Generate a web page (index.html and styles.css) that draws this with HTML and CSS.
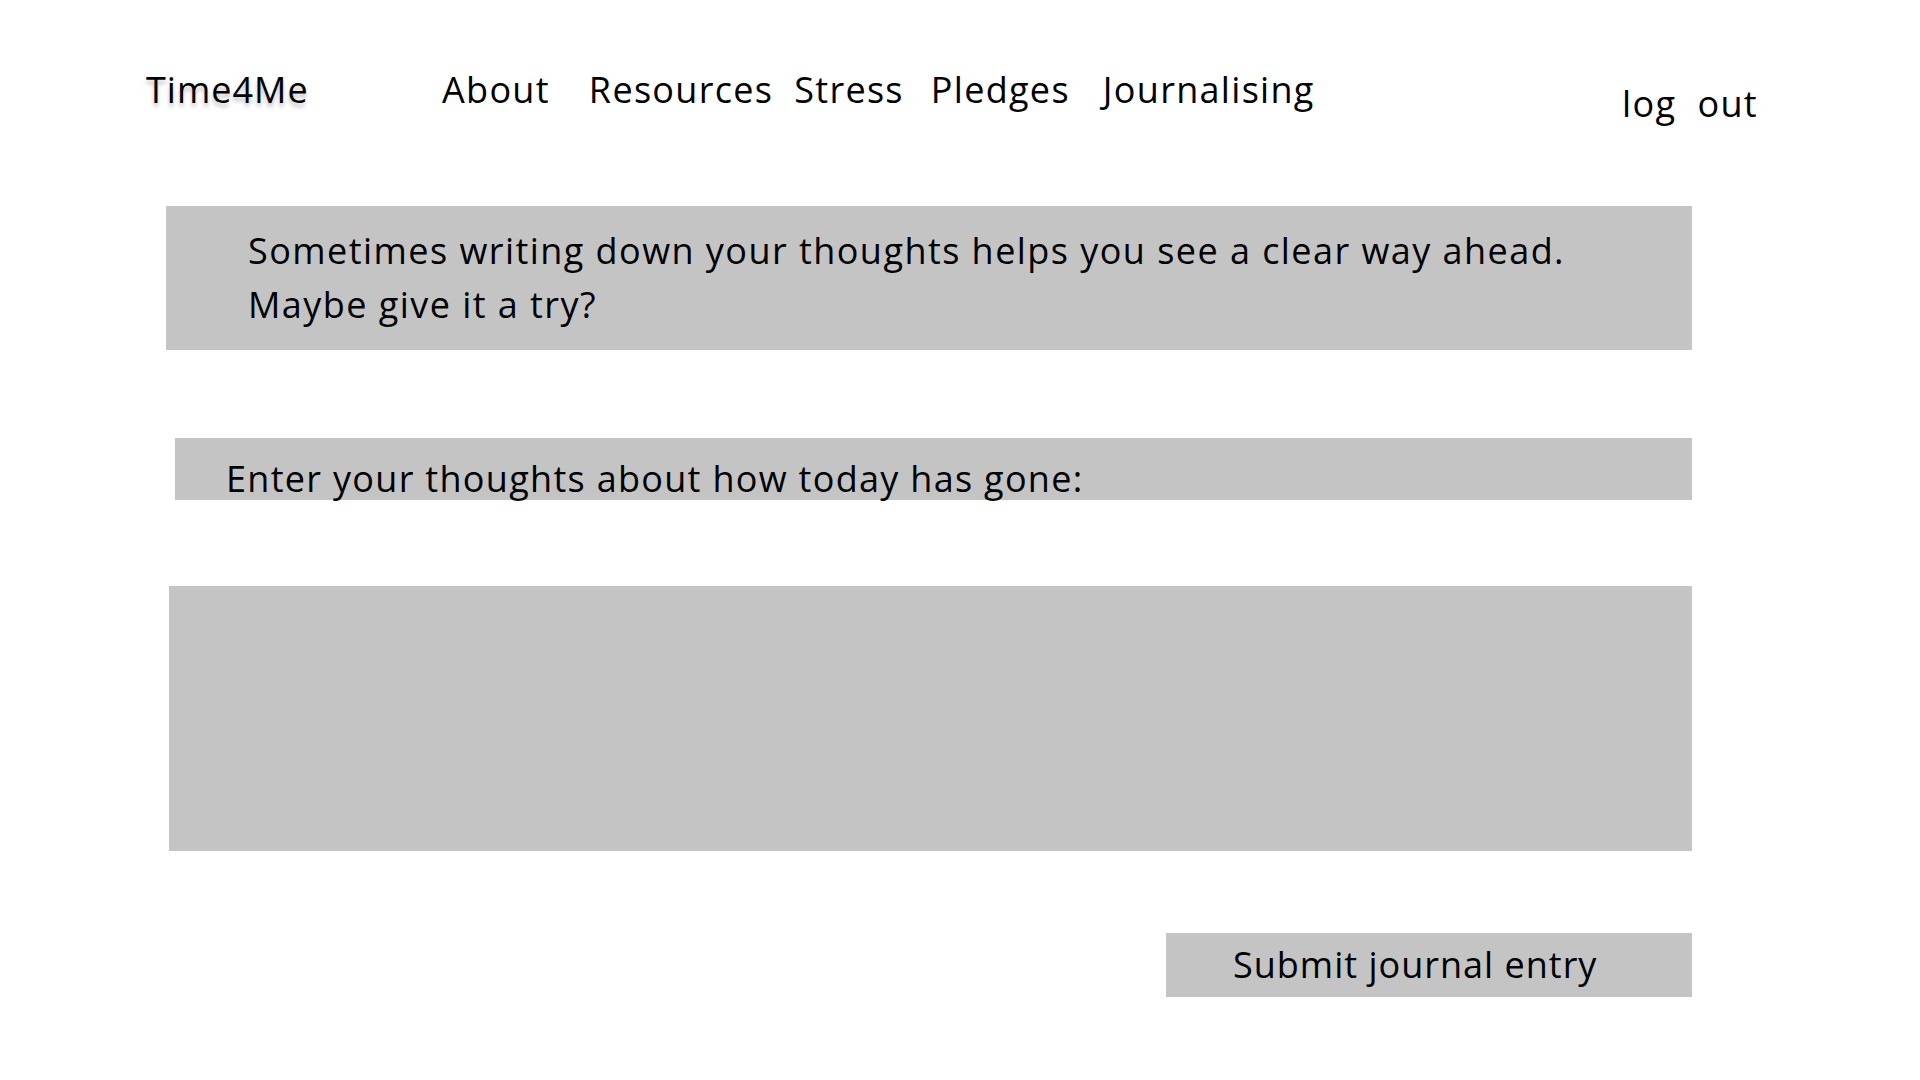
FILE: index.html
```html
<!DOCTYPE html>
<html lang="en">
<head>
<meta charset="utf-8">
<title>Time4Me - Journalising</title>
<link rel="stylesheet" href="styles.css">
</head>
<body>
<header class="topbar">
  <div class="logo">Time4Me</div>
  <nav class="nav">
    <a class="nav-link nav-about" href="#">About</a>
    <a class="nav-link nav-resources" href="#">Resources</a>
    <a class="nav-link nav-stress" href="#">Stress</a>
    <a class="nav-link nav-pledges" href="#">Pledges</a>
    <a class="nav-link nav-journal" href="#">Journalising</a>
  </nav>
  <a class="logout" href="#">log&nbsp; out</a>
</header>
<main class="content">
  <section class="intro">
    <p>Sometimes writing down your thoughts helps you see a clear way ahead.<br>Maybe give it a try?</p>
  </section>
  <div class="prompt">Enter your thoughts about how today has gone:</div>
  <textarea class="entry" aria-label="Journal entry"></textarea>
  <button class="submit" type="button">Submit journal entry</button>
</main>
</body>
</html>
```
FILE: styles.css
```css
* { box-sizing: border-box; }
html, body { margin: 0; padding: 0; background: #ffffff; }
body {
  font-family: "Open Sans", "DejaVu Sans", sans-serif;
  color: #000;
  width: 1920px;
  height: 1080px;
  overflow: hidden;
  letter-spacing: 1.3px;
}
.topbar {
  display: flex;
  align-items: flex-start;
  padding: 66px 0 0 146px;
  height: 206px;
}
.logo {
  font-size: 36px;
  line-height: 48px;
  letter-spacing: 1px;
  text-shadow: 0 4px 4px rgba(0,0,0,0.25);
  width: 296px;
}
.nav { display: flex; }
.nav-link {
  color: #000;
  text-decoration: none;
  font-size: 36px;
  line-height: 48px;
}
.nav-resources { margin-left: 39px; }
.nav-stress { margin-left: 21px; }
.nav-pledges { margin-left: 27px; }
.nav-journal { margin-left: 33px; }
.logout {
  margin-left: auto;
  margin-right: 162px;
  margin-top: 14px;
  color: #000;
  text-decoration: none;
  font-size: 36px;
  line-height: 48px;
}
.content {
  display: flex;
  flex-direction: column;
  align-items: flex-end;
  padding-right: 228px;
}
.intro {
  width: 1526px;
  height: 144px;
  background: #c4c4c4;
  padding: 18px 0 0 82px;
}
.intro p {
  margin: 0;
  font-size: 36px;
  line-height: 54px;
  letter-spacing: 1.45px;
}
.prompt {
  margin-top: 88px;
  width: 1517px;
  height: 62px;
  background: #c4c4c4;
  padding: 17px 0 0 51px;
  font-size: 36px;
  line-height: 48px;
  white-space: nowrap;
}
.entry {
  display: block;
  margin-top: 86px;
  width: 1523px;
  height: 265px;
  background: #c4c4c4;
  border: none;
  outline: none;
  resize: none;
  padding: 0;
  font-family: inherit;
}
.submit {
  margin-top: 82px;
  width: 526px;
  height: 64px;
  background: #c4c4c4;
  border: none;
  text-align: left;
  padding: 0 0 0 67px;
  font-family: inherit;
  font-size: 36px;
  line-height: 48px;
  letter-spacing: 1px;
  color: #000;
}
```
